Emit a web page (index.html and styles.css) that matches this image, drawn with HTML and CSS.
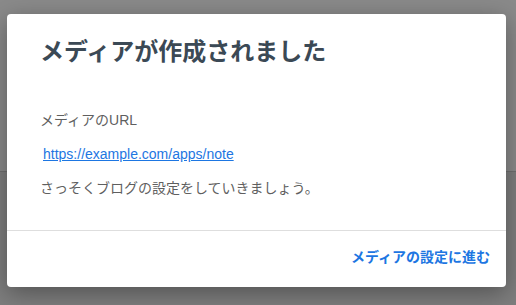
FILE: index.html
```html
<!DOCTYPE html>
<html lang="ja">
<head>
<meta charset="utf-8">
<title>メディアが作成されました</title>
<link rel="stylesheet" href="styles.css">
</head>
<body>
<div class="page">
  <div class="page-header"></div>
  <div class="page-body"></div>
</div>
<div class="overlay">
  <div class="dialog" role="dialog">
    <div class="dialog-header">
      <h1 class="dialog-title">メディアが作成されました</h1>
    </div>
    <div class="dialog-content">
      <p class="label">メディアのURL</p>
      <p class="url"><a href="#" class="url-link">https://example.com/apps/note</a></p>
      <p class="message">さっそくブログの設定をしていきましょう。</p>
    </div>
    <div class="dialog-footer">
      <a href="#" class="action">メディアの設定に進む</a>
    </div>
  </div>
</div>
</body>
</html>
```

FILE: styles.css
```css
* { box-sizing: border-box; }
html, body { margin: 0; padding: 0; }
body {
  width: 516px;
  height: 305px;
  overflow: hidden;
  font-family: "Liberation Sans", "Noto Sans CJK JP", sans-serif;
  background: #7c7c7c;
  position: relative;
}
.page { height: 305px; display: flex; flex-direction: column; }
.page-header {
  height: 172px;
  background: #8a8a8a;
  border-bottom: 1px solid #6f6f6f;
}
.page-body { flex: 1; background: #7e7e7e; }
.overlay {
  position: absolute;
  inset: 0;
  padding: 14px 10px 0 7px;
}
.dialog {
  width: 499px;
  height: 273px;
  background: #fff;
  border-radius: 4px;
  box-shadow: 0 6px 24px rgba(0,0,0,0.35);
  display: flex;
  flex-direction: column;
}
.dialog-header { padding: 20px 33px 0; }
.dialog-title {
  margin: 0;
  font-size: 24px;
  line-height: 36px;
  font-weight: 700;
  color: #3b4955;
}
.dialog-content {
  padding: 40px 33px 0;
  flex: 1;
  display: flex;
  flex-direction: column;
  gap: 13px;
}
.dialog-content p {
  margin: 0;
  font-size: 14px;
  line-height: 21px;
  color: #5f5f5f;
}
.url { padding-left: 3px; }
.url-link { color: #1d76e2; text-decoration: underline; }
.dialog-footer {
  border-top: 1px solid #dedede;
  padding: 16px 16px 19px;
  display: flex;
  justify-content: flex-end;
}
.action {
  font-size: 14px;
  line-height: 21px;
  font-weight: 700;
  color: #1d76e2;
  text-decoration: none;
}
```
